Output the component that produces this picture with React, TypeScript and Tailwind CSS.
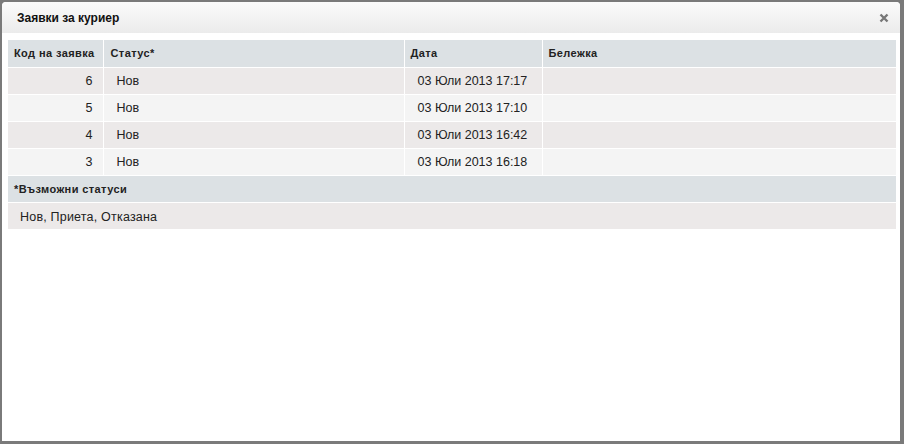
import React from "react";

const rows = [
  { id: 6, status: "Нов", date: "03 Юли 2013 17:17" },
  { id: 5, status: "Нов", date: "03 Юли 2013 17:10" },
  { id: 4, status: "Нов", date: "03 Юли 2013 16:42" },
  { id: 3, status: "Нов", date: "03 Юли 2013 16:18" },
];

export default function App() {
  return (
    <div
      className="w-[904px] h-[444px] bg-[#7a7a7a] pt-[2px] pl-[2px] pr-[4px] pb-[3px]"
      style={{ fontFamily: '"Liberation Sans", Arial, sans-serif' }}
    >
      <div className="w-full h-full bg-white rounded-t-[4px] flex flex-col overflow-hidden">
        <div className="h-[31px] shrink-0 bg-gradient-to-b from-[#fbfbfb] to-[#ebebeb] flex items-center justify-between pl-[15px] pr-[11px]">
          <span className="text-[12px] font-bold text-[#111]">Заявки за куриер</span>
          <svg width="10" height="10" viewBox="0 0 10 10" className="mt-[1px]">
            <path d="M1.5 1.5 L8.5 8.5 M8.5 1.5 L1.5 8.5" stroke="#777" strokeWidth="2.4" strokeLinecap="butt" />
          </svg>
        </div>
        <div className="pt-[7px] px-[6px] pr-[4px]">
          <table className="w-[888px] border-collapse text-[#222] table-fixed">
            <colgroup>
              <col className="w-[95px]" />
              <col className="w-[301px]" />
              <col className="w-[138px]" />
              <col />
            </colgroup>
            <thead>
              <tr className="h-[27px] bg-[#dce1e4] text-[11px] font-bold tracking-[0.4px]">
                <th className="border-r border-b border-white text-left pl-[6px] font-bold">Код на заявка</th>
                <th className="border-r border-b border-white text-left pl-[7px] font-bold">Статус*</th>
                <th className="border-r border-b border-white text-left pl-[6px] font-bold">Дата</th>
                <th className="border-b border-white text-left pl-[6px] font-bold">Бележка</th>
              </tr>
            </thead>
            <tbody className="text-[12.5px]">
              {rows.map((r, i) => (
                <tr key={r.id} className={`h-[27px] ${i % 2 === 0 ? "bg-[#ece9e9]" : "bg-[#f4f4f4]"}`}>
                  <td className="border-r border-b border-white text-right pr-[10px] pt-[2px]">{r.id}</td>
                  <td className="border-r border-b border-white pl-[13px] pt-[2px]">{r.status}</td>
                  <td className="border-r border-b border-white pl-[13px] pt-[2px]">{r.date}</td>
                  <td className="border-b border-white"></td>
                </tr>
              ))}
              <tr className="h-[27px] bg-[#dce1e4]">
                <td colSpan={4} className="border-b border-white pl-[6px] pt-[2px] text-[11px] font-bold tracking-[0.4px]">
                  *Възможни статуси
                </td>
              </tr>
              <tr className="h-[27px] bg-[#ece9e9]">
                <td colSpan={4} className="pl-[12px] pt-[3px] tracking-[0.2px]">Нов, Приета, Отказана</td>
              </tr>
            </tbody>
          </table>
        </div>
      </div>
    </div>
  );
}
